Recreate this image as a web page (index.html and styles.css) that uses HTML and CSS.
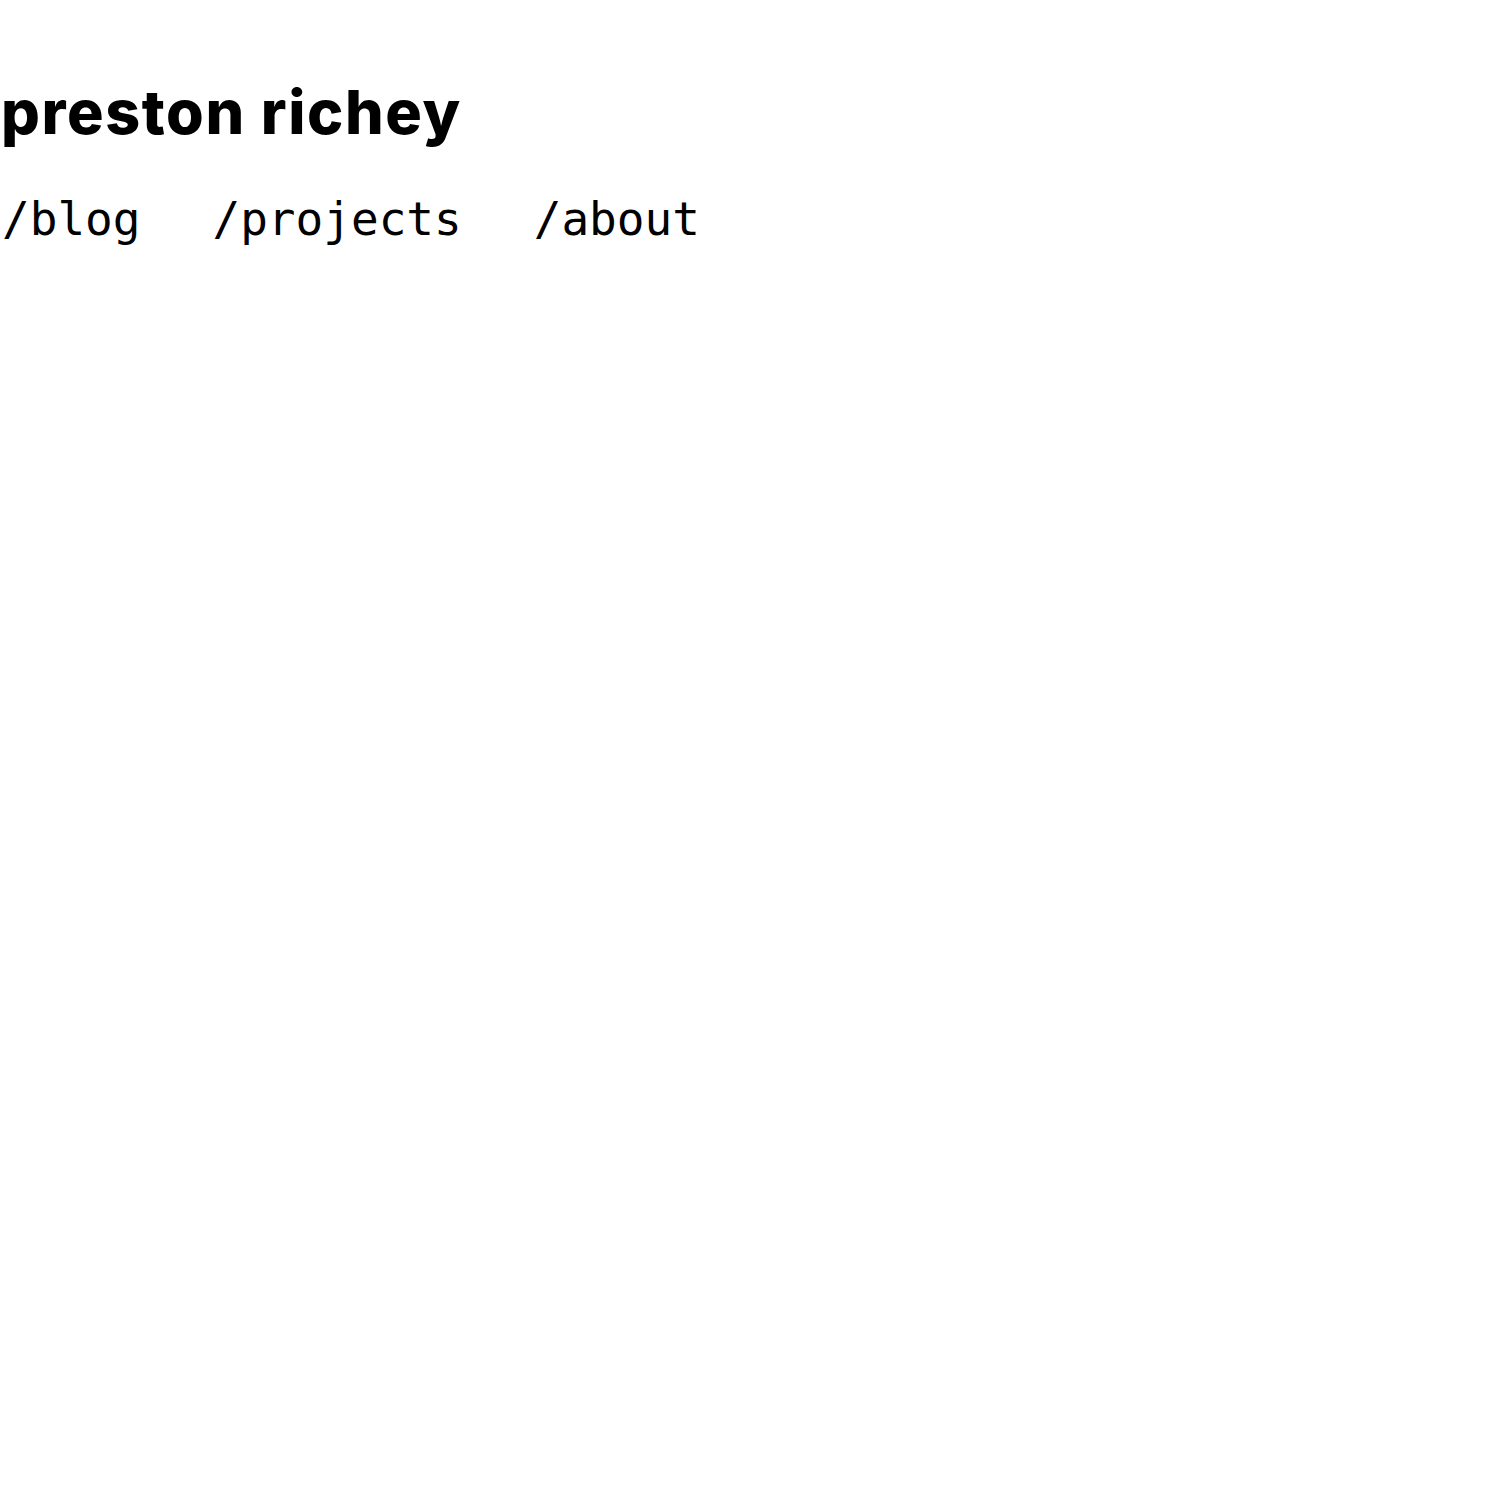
FILE: index.html
```html
<!DOCTYPE html>
<html lang="en">
<head>
<meta charset="utf-8">
<title>preston richey</title>
<link rel="stylesheet" href="styles.css">
</head>
<body>
<header class="site-header">
  <h1 class="site-title">preston richey</h1>
  <nav class="site-nav">
    <a href="#" class="nav-link">/blog</a>
    <a href="#" class="nav-link">/projects</a>
    <a href="#" class="nav-link">/about</a>
  </nav>
</header>
</body>
</html>
```

FILE: styles.css
```css
html, body {
  margin: 0;
  padding: 0;
  background: #fff;
  color: #000;
}
.site-header {
  padding-top: 72px;
}
.site-title {
  margin: 0;
  padding-left: 1px;
  font-family: Inter, "Noto Sans", sans-serif;
  font-weight: 800;
  font-size: 61px;
  line-height: 80px;
  letter-spacing: 1.6px;
}
.site-nav {
  display: flex;
  gap: 72px;
  margin-top: 37px;
  padding-left: 2px;
}
.nav-link {
  font-family: "DejaVu Sans Mono", monospace;
  font-size: 46px;
  line-height: 60px;
  color: #000;
  text-decoration: none;
}
```
